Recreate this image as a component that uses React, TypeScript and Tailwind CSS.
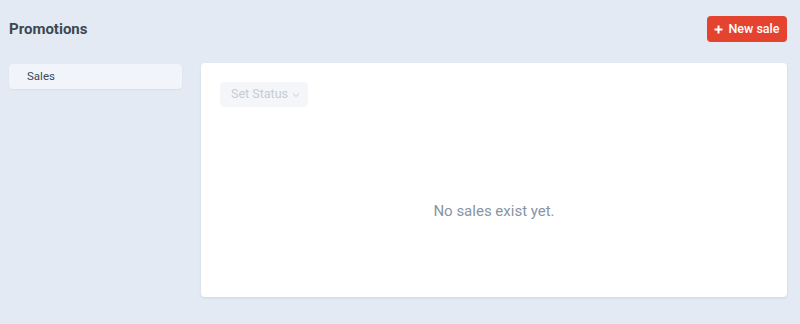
export default function App() {
  return (
    <div className="w-[800px] h-[324px] bg-[#e3eaf4] font-['Roboto',sans-serif] px-2 pt-4 overflow-hidden">
      <div className="flex items-center justify-between pr-[5px] ml-px">
        <h1 className="text-[15px] font-bold text-[#3d4852]">Promotions</h1>
        <button className="h-[26px] w-[80px] rounded bg-[#e4432f] text-white text-[12.5px] font-medium flex items-center justify-center gap-[5px]">
          <svg width="9" height="9" viewBox="0 0 9 9">
            <path d="M4.5 0.5v8M0.5 4.5h8" stroke="white" strokeWidth="2" />
          </svg>
          New sale
        </button>
      </div>
      <div className="flex gap-[19px] mt-[21px]">
        <div className="w-[174px] pt-px pl-px">
          <div className="h-[25px] rounded bg-[#f1f5fb] shadow-[0_1px_2px_rgba(0,0,0,0.05)] flex items-center pl-[18px] text-[11.5px] text-[#3d4852]">
            Sales
          </div>
        </div>
        <div className="w-[586px] h-[234px] bg-white rounded shadow-[0_1px_3px_rgba(0,0,0,0.08)] p-[19px]">
          <button className="h-[25px] pl-[11px] pr-[8px] rounded bg-[#f4f6f9] text-[12.5px] text-[#c6ccd4] flex items-center gap-[4px]">
            Set Status
            <svg width="8" height="6" viewBox="0 0 8 6">
              <path d="M1 1.5l3 3 3-3" fill="none" stroke="#c6ccd4" strokeWidth="1" />
            </svg>
          </button>
          <p className="mt-[94px] text-center text-[15px] leading-[20px] text-[#8795a5]">No sales exist yet.</p>
        </div>
      </div>
    </div>
  );
}
